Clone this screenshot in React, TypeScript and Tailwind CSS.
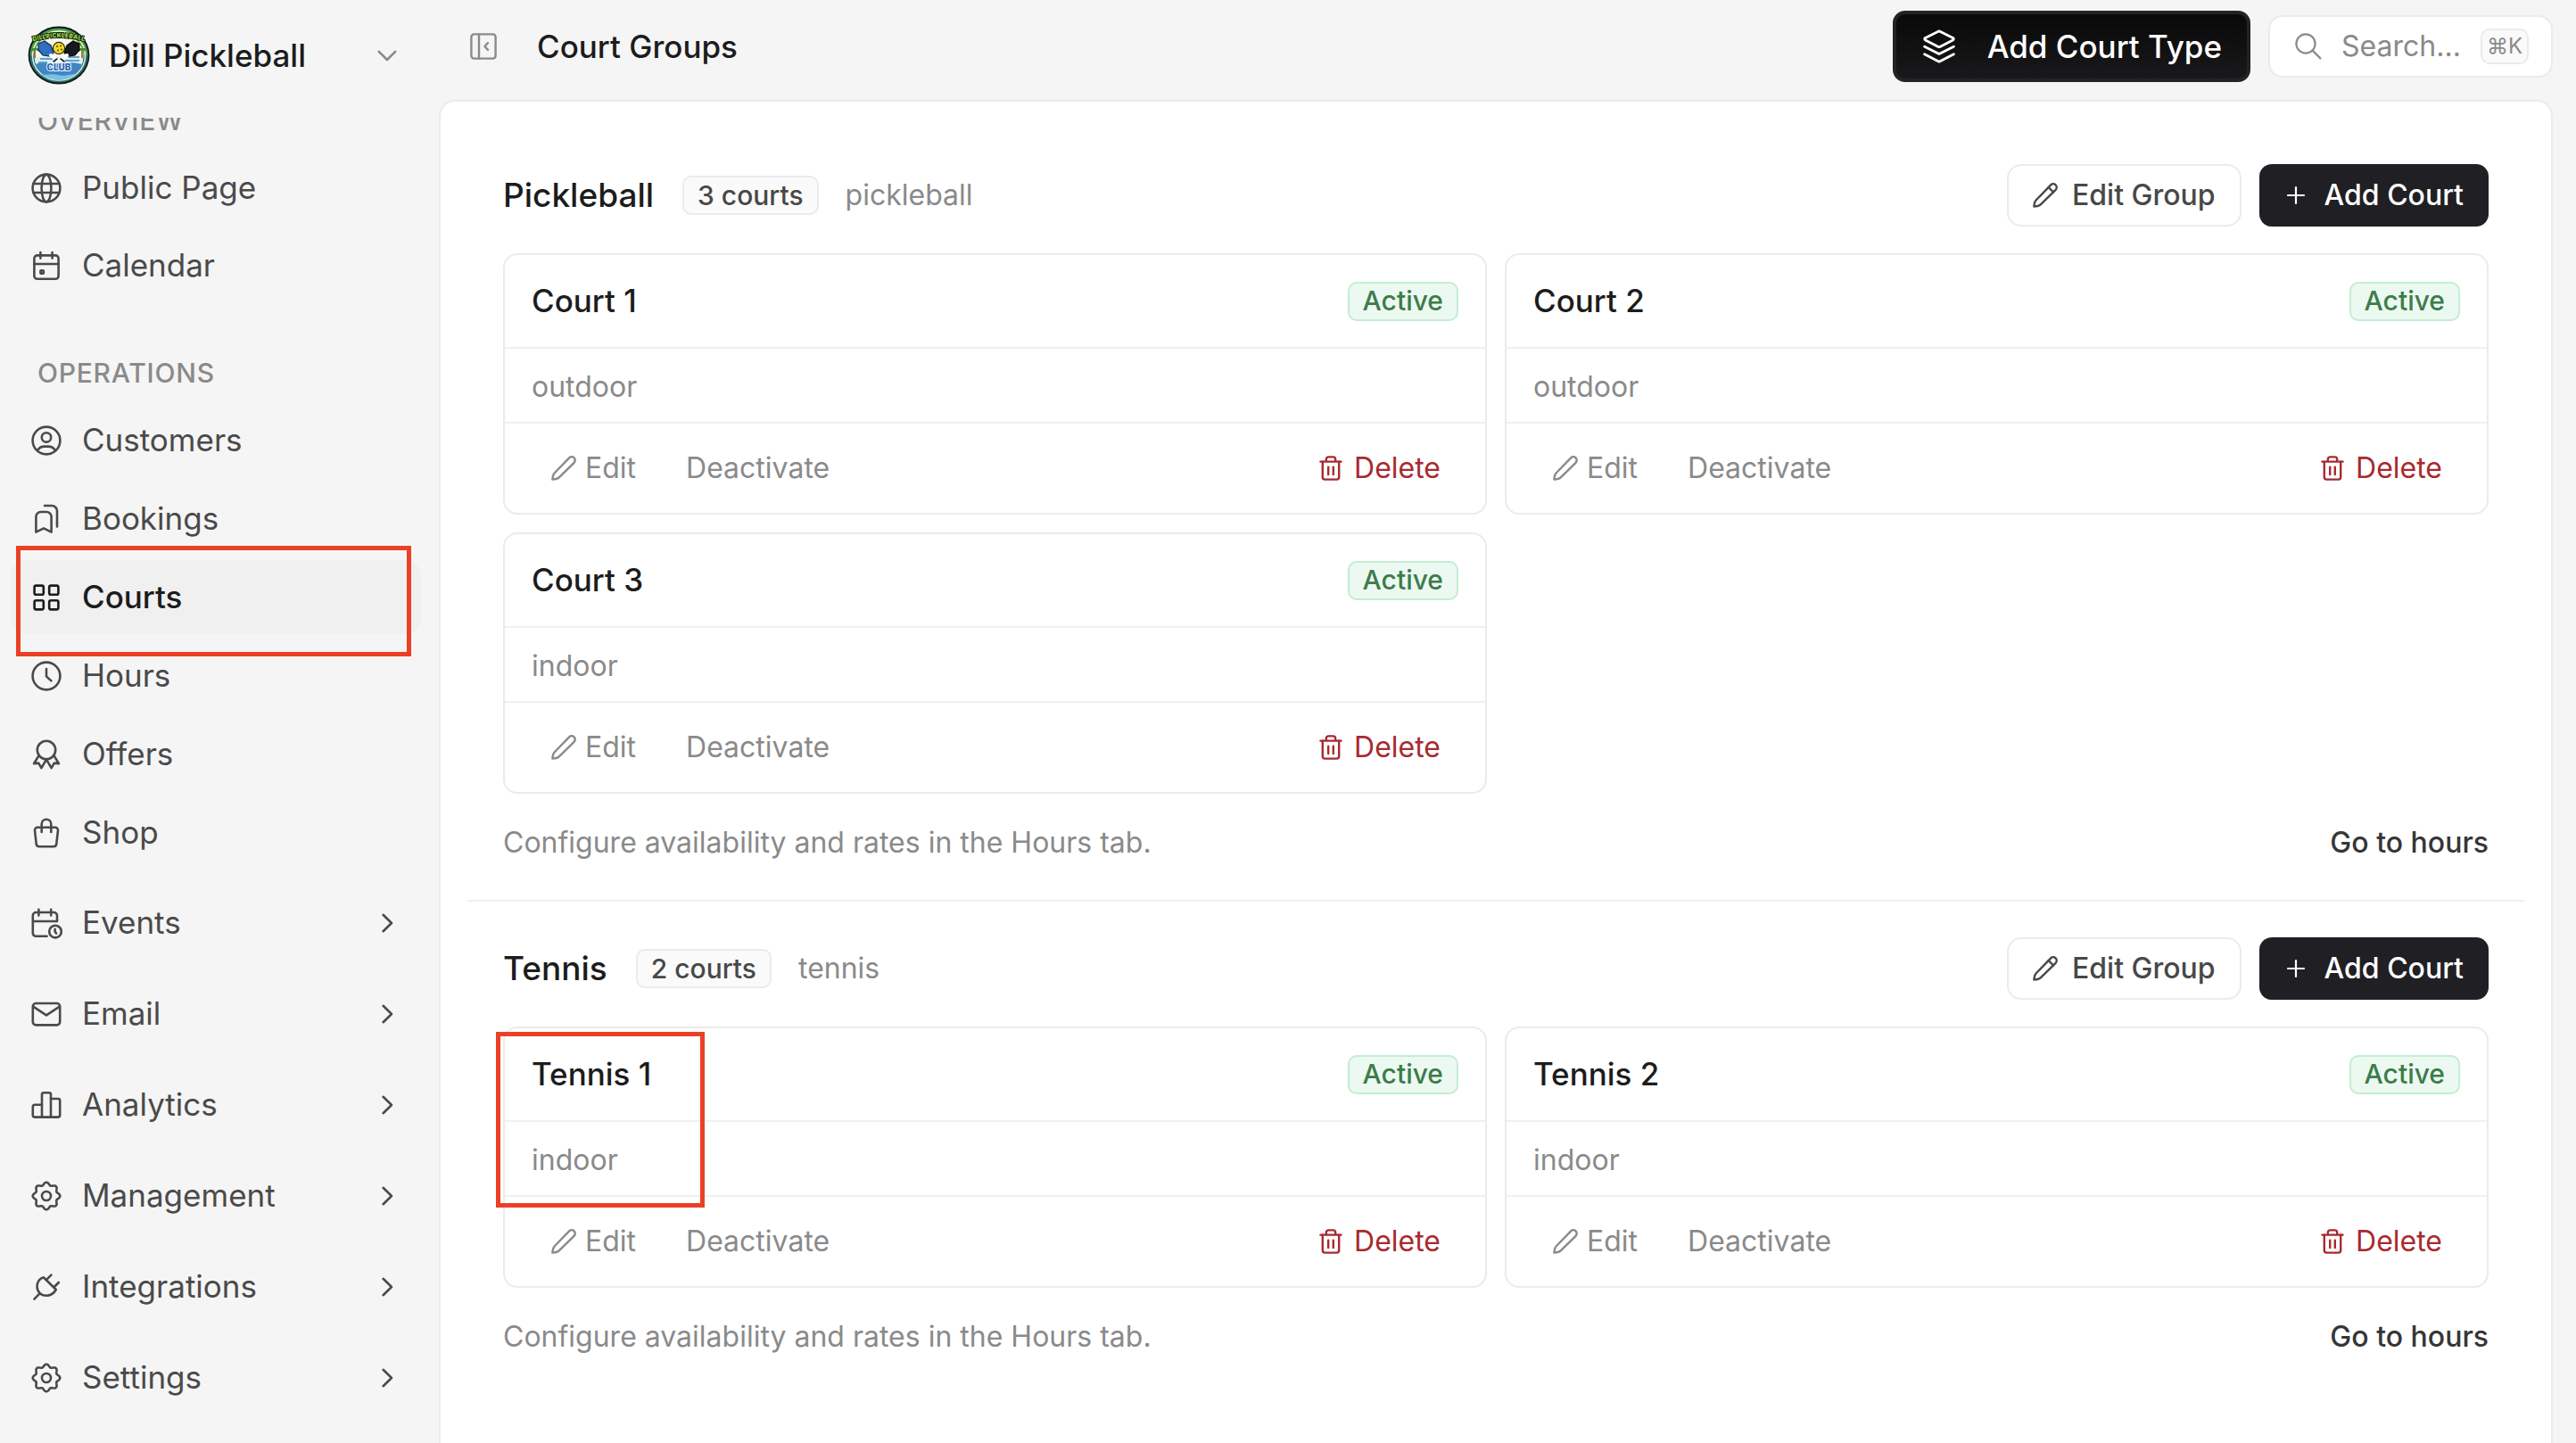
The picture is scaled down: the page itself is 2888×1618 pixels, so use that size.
import type { ReactNode } from "react";

type Court = {
  name: string;
  kind: string;
  marked?: boolean;
};

type CourtGroup = {
  name: string;
  slug: string;
  courts: Court[];
};

type NavItem = {
  label: string;
  icon: ReactNode;
  active?: boolean;
};

// outline of an eight-toothed gear centred in a 36x36 box
function gearPath() {
  const points: string[] = [];
  for (let i = 0; i < 144; i++) {
    const a = (i / 144) * Math.PI * 2;
    const r = 13.8 + 1.5 * Math.cos(8 * a);
    points.push(`${(18 + r * Math.sin(a)).toFixed(2)} ${(18 - r * Math.cos(a)).toFixed(2)}`);
  }
  return `M${points.join("L")}Z`;
}

const GEAR = gearPath();

function NavIcon({ children }: { children: ReactNode }) {
  return (
    <svg
      className="size-9 shrink-0"
      viewBox="0 0 36 36"
      fill="none"
      stroke="currentColor"
      strokeWidth="2.6"
      strokeLinecap="round"
      strokeLinejoin="round"
      aria-hidden="true"
    >
      {children}
    </svg>
  );
}

const gearIcon = (
  <NavIcon>
    <path d={GEAR} />
    <circle cx="18" cy="18" r="5" />
  </NavIcon>
);

const overview: NavItem[] = [
  {
    label: "Public Page",
    icon: (
      <NavIcon>
        <circle cx="18" cy="18" r="15.4" />
        <ellipse cx="18" cy="18" rx="5.4" ry="15.4" />
        <path d="M3.5 13h29M3.5 23h29" />
      </NavIcon>
    ),
  },
  {
    label: "Calendar",
    icon: (
      <NavIcon>
        <rect x="4.4" y="6.4" width="27.2" height="26.4" rx="3.4" />
        <path d="M4.4 16h27.2M11.4 3v6.6M24.6 3v6.6" />
        <rect x="11.4" y="23.2" width="3.4" height="3.4" rx="0.6" />
      </NavIcon>
    ),
  },
];

const operations: NavItem[] = [
  {
    label: "Customers",
    icon: (
      <NavIcon>
        <circle cx="18" cy="18" r="15.4" />
        <circle cx="18" cy="14.4" r="5.2" />
        <path d="M8 29.2c1.8-3.4 4.4-4.6 8-4.6h4c3.6 0 6.2 1.2 8 4.6" />
      </NavIcon>
    ),
  },
  {
    label: "Bookings",
    icon: (
      <NavIcon>
        <path d="M6.4 32.6V15.4a5.4 5.4 0 0 1 5.4-5.4h6.4a5.4 5.4 0 0 1 5.4 5.4v17.2l-8.6-4.2z" />
        <path d="M16 3h8a6 6 0 0 1 6 6v17.4" />
      </NavIcon>
    ),
  },
  {
    label: "Courts",
    active: true,
    icon: (
      <NavIcon>
        <rect x="4.6" y="4.6" width="10.2" height="10.2" rx="1.8" />
        <rect x="21.2" y="4.6" width="10.2" height="10.2" rx="1.8" />
        <rect x="4.6" y="21.2" width="10.2" height="10.2" rx="1.8" />
        <rect x="21.2" y="21.2" width="10.2" height="10.2" rx="1.8" />
      </NavIcon>
    ),
  },
  {
    label: "Hours",
    icon: (
      <NavIcon>
        <circle cx="18" cy="18" r="15.4" />
        <path d="M18 10v8.4l5.4 5" />
      </NavIcon>
    ),
  },
  {
    label: "Offers",
    icon: (
      <NavIcon>
        <circle cx="18" cy="13" r="10.2" />
        <path d="M9.4 19.4L4 28.2l5.2-.6 3.2 5.6 5.6-9.6 5.6 9.6 3.2-5.6 5.2.6-5.4-8.8" />
      </NavIcon>
    ),
  },
  {
    label: "Shop",
    icon: (
      <NavIcon>
        <path d="M8 11.8h20a3 3 0 0 1 3 3.3l-1.7 15a3.5 3.5 0 0 1-3.5 3.2H10.2a3.5 3.5 0 0 1-3.5-3.2L5 15.1a3 3 0 0 1 3-3.3z" />
        <path d="M12.7 17V8a5.3 5.3 0 0 1 10.6 0v9" />
      </NavIcon>
    ),
  },
];

const sections: NavItem[] = [
  {
    label: "Events",
    icon: (
      <NavIcon>
        <path d="M18.6 32.8H6.4a3.6 3.6 0 0 1-3.6-3.6V9.6A3.6 3.6 0 0 1 6.4 6h20a3.6 3.6 0 0 1 3.6 3.6V16H2.8" />
        <path d="M9.4 2.8v6.600M23.2 2.8v6.600" />
        <circle cx="28" cy="27.6" r="6.8" />
        <path d="M27.6 24.8v2.8l1.4 2" />
      </NavIcon>
    ),
  },
  {
    label: "Email",
    icon: (
      <NavIcon>
        <rect x="2.8" y="6" width="30.4" height="24.4" rx="3.6" />
        <path d="M3.2 9.6L18 19.4l14.8-9.8" />
      </NavIcon>
    ),
  },
  {
    label: "Analytics",
    icon: (
      <NavIcon>
        <path d="M13 31.6H4.8a2 2 0 0 1-2-2V19.8a2 2 0 0 1 2-2H13" />
        <path d="M13 31.6V6.2a2 2 0 0 1 2-2h6a2 2 0 0 1 2 2v25.4z" />
        <path d="M23 31.6h8.2a2 2 0 0 0 2-2V13a2 2 0 0 0-2-2H23" />
      </NavIcon>
    ),
  },
  { label: "Management", icon: gearIcon },
  {
    label: "Integrations",
    icon: (
      <NavIcon>
        <path d="M14.8 7.2l14 13.8c-2.4 4.2-6.4 6.8-10.8 6.8-6.2 0-10.4-4.4-10.4-10 0-5 2.8-9.2 7.2-10.6z" />
        <path d="M18.4 9.6l5-5M26.8 18l5-5M4.4 31.6l5.6-5.8" />
      </NavIcon>
    ),
  },
  { label: "Settings", icon: gearIcon },
];

const groups: CourtGroup[] = [
  {
    name: "Pickleball",
    slug: "pickleball",
    courts: [
      { name: "Court 1", kind: "outdoor" },
      { name: "Court 2", kind: "outdoor" },
      { name: "Court 3", kind: "indoor" },
    ],
  },
  {
    name: "Tennis",
    slug: "tennis",
    courts: [
      { name: "Tennis 1", kind: "indoor", marked: true },
      { name: "Tennis 2", kind: "indoor" },
    ],
  },
];

function ClubLogo() {
  return (
    <svg className="h-[66px] w-[70px] shrink-0" viewBox="0 0 70 66" aria-hidden="true">
      <ellipse cx="35" cy="33" rx="33.5" ry="31.5" fill="#2b6f74" stroke="#101c1c" strokeWidth="1.8" />
      <path d="M3 33a32 30 0 0 1 64 0z" fill="#5aa53a" />
      <ellipse cx="35" cy="33.5" rx="29.5" ry="27.5" fill="none" stroke="#e8f6e4" strokeWidth="1.4" />
      <ellipse cx="35" cy="34" rx="27.5" ry="25.5" fill="#f7f5e6" />
      <path d="M8 36c9-2 18 0 27-1s18 0 27 1c0 4-1 7-2 9H10c-1-2-2-5-2-9z" fill="#d9eef5" />
      <path d="M9 43c8-3 17 1 26-1s18-1 26 1c-4 10-14 17-26 17S13 53 9 43z" fill="#3f86c6" />
      <path d="M14 37h14M42 39h16M12 41h10M46 35h12" stroke="#3e86b8" strokeWidth="1.4" />
      <path d="M14 54c6 2 12-1 20 1s14-1 20-1c-5 4-12 7-19 7s-15-3-21-7z" fill="#7cc0e4" />
      <path d="M8 27v9M61 27v9" stroke="#8a5a2c" strokeWidth="1.6" />
      <path d="M4 28c3-3 6-3 9 0M57 28c3-3 6-3 9 0" stroke="#3c8a34" strokeWidth="2.4" fill="none" />
      <path d="M12 20l7-3 7 5 3 8-4 4-8-1-5-6z" fill="#2f6fc0" stroke="#12305a" strokeWidth="1.2" />
      <path d="M58 20l-7-3-7 5-3 8 4 4 8-1 5-6z" fill="#16191d" stroke="#07090a" strokeWidth="1.2" />
      <path d="M26 33l7 5M44 33l-7 5" stroke="#ffffff" strokeWidth="4" strokeLinecap="round" />
      <path d="M29 40l4-3M41 40l-4-3" stroke="#1b1d1f" strokeWidth="1.6" strokeLinecap="round" />
      <circle cx="35" cy="25" r="6.6" fill="#f4d92c" stroke="#2d2a0c" strokeWidth="1.2" />
      <circle cx="33" cy="23" r="1" fill="#4c430c" />
      <circle cx="37" cy="22.5" r="1" fill="#4c430c" />
      <circle cx="34" cy="27.5" r="1" fill="#4c430c" />
      <circle cx="38" cy="26.5" r="1" fill="#4c430c" />
      <path id="club-arc" d="M1 19Q35 7 69 19" fill="none" />
      <text
        className="font-['Inter',sans-serif] text-[7px] font-extrabold"
        fill="#9bdc46"
        stroke="#14240e"
        strokeWidth="2"
        paintOrder="stroke"
        textAnchor="middle"
      >
        <textPath href="#club-arc" startOffset="50%">
          DILLPICKLEBALL
        </textPath>
      </text>
      <text
        x="35"
        y="50"
        className="font-['Inter',sans-serif] text-[10px] font-extrabold"
        fill="#1f5fae"
        stroke="#ffffff"
        strokeWidth="1.8"
        paintOrder="stroke"
        textAnchor="middle"
      >
        CLUB
      </text>
    </svg>
  );
}

function PencilIcon({ tip }: { tip?: boolean }) {
  return (
    <svg
      className="size-7 shrink-0"
      viewBox="0 0 28 28"
      fill="none"
      stroke="currentColor"
      strokeWidth="2.4"
      strokeLinecap="round"
      strokeLinejoin="round"
      aria-hidden="true"
    >
      <path d="M1.4 26.6c.2-3 .8-5.8 2.6-7.6L20.2 2.4a3.8 3.8 0 0 1 5.4 5.4L9 24.2c-1.8 1.8-4.6 2.3-7.6 2.4z" />
      {tip && <path d="M17.6 5l5.4 5.4" />}
    </svg>
  );
}

function TrashIcon() {
  return (
    <svg
      className="h-7 w-[26px] shrink-0"
      viewBox="0 0 26 28"
      fill="none"
      stroke="currentColor"
      strokeWidth="2.4"
      strokeLinecap="round"
      strokeLinejoin="round"
      aria-hidden="true"
    >
      <path d="M1.4 6.6h23.2M7.8 6.4V4a2.6 2.6 0 0 1 2.6-2.6h5.2A2.6 2.6 0 0 1 18.2 4v2.4" />
      <path d="M3.8 6.8V24a2.6 2.6 0 0 0 2.6 2.6h13.2a2.6 2.6 0 0 0 2.6-2.6V6.8" />
      <path d="M10.2 12.6V21M15.8 12.6V21" />
    </svg>
  );
}

function NavLink({ item, expandable }: { item: NavItem; expandable?: boolean }) {
  return (
    <li className="relative">
      <a
        href="#"
        aria-current={item.active ? "page" : undefined}
        className={
          item.active
            ? "flex h-[83px] items-center gap-[22px] rounded-[18px] bg-[#f0f0f0] pr-5 pl-[22px] text-[35px] font-medium text-[#1c1c1c]"
            : "flex h-[83px] items-center gap-[22px] rounded-[18px] pr-5 pl-[22px] text-[35px] text-[#4a4a4a]"
        }
      >
        {item.icon}
        <span className="flex-1">{item.label}</span>
        {expandable && (
          <NavIcon>
            <path d="M13.6 8.8L23 18l-9.4 9.2" />
          </NavIcon>
        )}
      </a>
      {item.active && (
        <div className="pointer-events-none absolute -top-4 right-[11px] -bottom-[25px] left-1.5 border-5 border-[#eb4026]" />
      )}
    </li>
  );
}

function NavLabel({ children }: { children: ReactNode }) {
  return (
    <h2 className="flex h-[67px] items-center px-[30px] text-[30px] font-medium tracking-wide text-[#8a8a8a] uppercase">
      {children}
    </h2>
  );
}

function Sidebar() {
  return (
    <aside className="flex w-[492px] shrink-0 flex-col px-3">
      <button type="button" className="flex h-[132px] shrink-0 items-center gap-[21px] pr-7 pb-2 pl-[19px] text-left">
        <ClubLogo />
        <span className="flex-1 text-[35px] font-medium text-[#1c1c1c]">Dill Pickleball</span>
        <svg
          className="size-9 shrink-0 text-[#8a8a8a]"
          viewBox="0 0 36 36"
          fill="none"
          stroke="currentColor"
          strokeWidth="2.6"
          strokeLinecap="round"
          strokeLinejoin="round"
          aria-hidden="true"
        >
          <path d="M8.8 13.8l9.2 9.2 9.2-9.2" />
        </svg>
      </button>
      <nav className="min-h-0 flex-1 overflow-hidden pr-2">
        <div className="-mt-[30px]">
          <NavLabel>Overview</NavLabel>
          <ul className="flex flex-col gap-1">
            {overview.map((item) => (
              <NavLink key={item.label} item={item} />
            ))}
          </ul>
        </div>
        <div className="mt-[46px]">
          <NavLabel>Operations</NavLabel>
          <ul className="flex flex-col gap-[5px]">
            {operations.map((item) => (
              <NavLink key={item.label} item={item} />
            ))}
          </ul>
        </div>
        <ul className="mt-[18px] flex flex-col gap-[19px]">
          {sections.map((item) => (
            <NavLink key={item.label} item={item} expandable />
          ))}
        </ul>
      </nav>
    </aside>
  );
}

function TopBar() {
  return (
    <header className="flex h-[112px] shrink-0 items-center gap-5 pb-2 pl-[35px]">
      <button type="button" aria-label="Collapse sidebar" className="text-[#8a8a8a]">
        <svg
          className="size-[30px]"
          viewBox="0 0 30 30"
          fill="none"
          stroke="currentColor"
          strokeWidth="2.4"
          strokeLinecap="round"
          strokeLinejoin="round"
        >
          <rect x="1.4" y="1.4" width="27.2" height="27.2" rx="3" />
          <path d="M10 1.4v27.2M20 11.2L16.4 15l3.6 3.8" />
        </svg>
      </button>
      <h1 className="flex-1 pl-[25px] text-[35px] font-medium text-[#1c1c1c]">Court Groups</h1>
      <button
        type="button"
        className="flex h-20 items-center gap-9 rounded-[14px] border-4 border-[#232325] bg-linear-to-b from-[#09090a] to-[#19191b] pr-7 pl-[30px] text-[35px] font-medium text-white"
      >
        <svg
          className="h-[38px] w-9"
          viewBox="0 0 36 38"
          fill="none"
          stroke="currentColor"
          strokeWidth="2.8"
          strokeLinecap="round"
          strokeLinejoin="round"
          aria-hidden="true"
        >
          <path d="M16.6 2.4a3 3 0 0 1 2.8 0l14 7a1.4 1.4 0 0 1 0 2.6l-14 7.2a3 3 0 0 1-2.8 0L2.6 12a1.4 1.4 0 0 1 0-2.6z" />
          <path d="M1.6 19.2L18 27.6l16.4-8.4M1.6 27.8L18 36.2l16.4-8.4" />
        </svg>
        Add Court Type
      </button>
      <label className="flex h-[70px] w-[319px] items-center rounded-2xl border-2 border-[#ebebeb] bg-white pr-[25px] pl-7 text-[#8a8a8a]">
        <svg
          className="size-[30px] shrink-0"
          viewBox="0 0 30 30"
          fill="none"
          stroke="currentColor"
          strokeWidth="2.2"
          strokeLinecap="round"
          aria-hidden="true"
        >
          <circle cx="12" cy="12" r="10.6" />
          <path d="M19.6 19.6l8.8 8.8" />
        </svg>
        <input
          type="text"
          aria-label="Search"
          placeholder="Search..."
          className="min-w-0 flex-1 pl-[22px] text-[32px] outline-none placeholder:text-[#8a8a8a]"
        />
        <kbd className="flex h-10 w-[54px] shrink-0 items-center justify-center rounded-[10px] border-2 border-[#ebebeb] bg-[#fafafa] font-['Inter',sans-serif] text-[24px]">
          ⌘K
        </kbd>
      </label>
    </header>
  );
}

function CourtCard({ court }: { court: Court }) {
  return (
    <article className="relative rounded-2xl border-2 border-[#ebebeb] bg-white">
      <div className="flex h-[105px] items-center justify-between border-b-2 border-[#f0f0f0] px-[30px]">
        <h3 className="text-[35px] font-medium text-[#1c1c1c]">{court.name}</h3>
        <span className="flex h-11 items-center rounded-[10px] border-2 border-[#c4edd3] bg-[#ecf9f1] px-[15px] text-[30px] font-medium text-[#3c7c4b]">
          Active
        </span>
      </div>
      <p className="flex h-[84px] items-center border-b-2 border-[#f0f0f0] px-[30px] pt-1 text-[32px] text-[#8a8a8a]">
        {court.kind}
      </p>
      <div className="flex h-[100px] items-center px-[30px] text-[32px] text-[#8a8a8a]">
        <button type="button" className="flex h-[62px] items-center gap-2.5 px-[22px]">
          <PencilIcon />
          Edit
        </button>
        <button type="button" className="ml-3 h-[62px] px-[22px]">
          Deactivate
        </button>
        <button type="button" className="ml-auto flex h-[62px] items-center gap-[13px] px-5 text-[#a82a30]">
          <TrashIcon />
          Delete
        </button>
      </div>
      {court.marked && (
        <div className="pointer-events-none absolute top-1 -left-2.5 h-[197px] w-[234px] border-5 border-[#eb4026]" />
      )}
    </article>
  );
}

function GroupSection({ group }: { group: CourtGroup }) {
  return (
    <section className="px-10 pt-10 pb-10">
      <div className="flex items-center">
        <h2 className="text-[37px] font-medium text-[#1c1c1c]">{group.name}</h2>
        <span className="ml-8 flex h-11 items-center rounded-[10px] border-2 border-[#ebebeb] bg-[#fafafa] px-[15px] text-[30px] font-medium text-[#484848]">
          {group.courts.length} courts
        </span>
        <span className="ml-[30px] flex-1 text-[32px] text-[#8a8a8a]">{group.slug}</span>
        <button
          type="button"
          className="flex h-[70px] items-center gap-4 rounded-2xl border-2 border-[#ebebeb] bg-white px-[27px] text-[32px] font-medium text-[#484848]"
        >
          <PencilIcon tip />
          Edit Group
        </button>
        <button
          type="button"
          className="ml-5 flex h-[70px] items-center gap-[21px] rounded-[14px] bg-[#201f23] px-7 text-[32px] font-medium text-white"
        >
          <svg
            className="size-6"
            viewBox="0 0 24 24"
            stroke="currentColor"
            strokeWidth="2.2"
            strokeLinecap="round"
            aria-hidden="true"
          >
            <path d="M13 3v18M4 12h18" />
          </svg>
          Add Court
        </button>
      </div>
      <div className="mt-[30px] grid grid-cols-2 gap-5">
        {group.courts.map((court) => (
          <CourtCard key={court.name} court={court} />
        ))}
      </div>
      <div className="mt-[31px] flex h-12 items-center justify-between text-[32px]">
        <p className="text-[#8a8a8a]">Configure availability and rates in the Hours tab.</p>
        <a href="#" className="font-medium text-[#363636]">
          Go to hours
        </a>
      </div>
    </section>
  );
}

export default function App() {
  return (
    <div className="flex h-screen overflow-hidden bg-[#f5f5f5] font-['Inter',sans-serif] whitespace-nowrap">
      <Sidebar />
      <div className="flex min-w-0 flex-1 flex-col pr-[26px]">
        <TopBar />
        <main className="min-h-0 flex-1 rounded-t-[18px] border-2 border-b-0 border-[#ebebeb] bg-white px-[30px] pt-[30px]">
          <div className="divide-y-2 divide-[#f0f0f0]">
            {groups.map((group) => (
              <GroupSection key={group.slug} group={group} />
            ))}
          </div>
        </main>
      </div>
    </div>
  );
}
